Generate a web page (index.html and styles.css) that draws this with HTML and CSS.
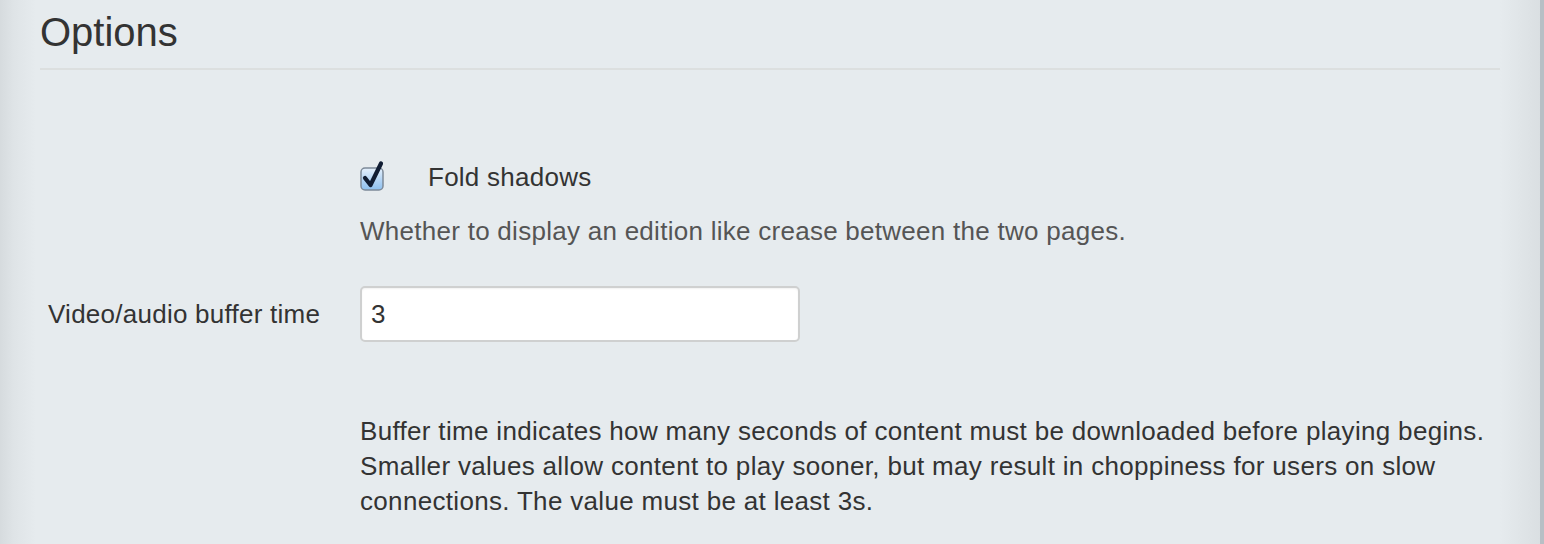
FILE: index.html
```html
<!DOCTYPE html>
<html lang="en">
<head>
<meta charset="utf-8">
<title>Options</title>
<link rel="stylesheet" href="styles.css">
</head>
<body>
<div class="page">
  <header class="header">
    <h1 class="title">Options</h1>
  </header>
  <form class="form">
    <div class="row row-check">
      <div class="label-col"></div>
      <div class="field-col">
        <label class="check">
          <span class="box">
            <svg width="28" height="34" viewBox="0 0 28 34" aria-hidden="true">
              <defs>
                <linearGradient id="bx" x1="0" y1="0" x2="0" y2="1">
                  <stop offset="0" stop-color="#e6f1fc"/>
                  <stop offset="0.5" stop-color="#b7d6f5"/>
                  <stop offset="1" stop-color="#8ec0ef"/>
                </linearGradient>
              </defs>
              <rect x="1" y="10" width="22" height="22" rx="4" ry="4" fill="url(#bx)" stroke="#7d8a99" stroke-width="1.5"/>
              <path d="M5 20 L10.5 27 L21 5.5" fill="none" stroke="#111d33" stroke-width="4.2" stroke-linecap="round" stroke-linejoin="round"/>
            </svg>
          </span>
          <span class="check-text">Fold shadows</span>
        </label>
        <p class="desc">Whether to display an edition like crease between the two pages.</p>
      </div>
    </div>
    <div class="row row-input">
      <label class="label-col label" for="buffer">Video/audio buffer time</label>
      <div class="field-col">
        <input id="buffer" class="input" type="text" value="3">
      </div>
    </div>
    <div class="row row-help">
      <div class="label-col"></div>
      <p class="help">Buffer time indicates how many seconds of content must be downloaded before playing begins.<br>Smaller values allow content to play sooner, but may result in choppiness for users on slow<br>connections. The value must be at least 3s.</p>
    </div>
  </form>
</div>
</body>
</html>
```
FILE: styles.css
```css
html, body {
  margin: 0;
  padding: 0;
}

body {
  font-family: "Liberation Sans", Arial, Helvetica, sans-serif;
  color: #333333;
  background: #e6ebee;
}

.page {
  box-sizing: border-box;
  height: 544px;
  overflow: hidden;
  background: linear-gradient(to right, #d6dbde 0, #dfe4e7 14px, #e6ebee 36px, #e6ebee 1500px, #dadfe2 1540px);
  border-right: 4px solid #b8bfc5;
}

.header {
  margin: 0 40px 0 40px;
  padding-top: 8px;
  padding-bottom: 12px;
  border-bottom: 2px solid #dcdfdf;
}

.title {
  margin: 0;
  font-size: 40px;
  line-height: 48px;
  font-weight: normal;
  color: #333333;
}

.form {
  padding-top: 91px;
}

.row {
  display: grid;
  grid-template-columns: 360px 1fr;
}

.label-col {
  box-sizing: border-box;
  padding-left: 48px;
}

.check {
  display: flex;
  align-items: flex-start;
  font-size: 26px;
  line-height: 32px;
  letter-spacing: 0.25px;
  color: #333333;
}

.box {
  display: block;
  width: 28px;
  height: 34px;
  margin-left: 0;
  margin-top: -3px;
}

.box svg {
  display: block;
}

.check-text {
  margin-left: 40px;
}

.desc {
  margin: 22px 0 0;
  font-size: 26px;
  line-height: 32px;
  letter-spacing: 0.27px;
  color: #555555;
}

.row-input {
  margin-top: 39px;
  align-items: center;
}

.label {
  font-size: 26px;
  line-height: 32px;
  color: #333333;
  letter-spacing: 0.25px;
}

.input {
  box-sizing: border-box;
  display: block;
  width: 440px;
  height: 56px;
  margin: 0;
  padding: 0 10px 0 9px;
  font-family: "Liberation Sans", Arial, sans-serif;
  font-size: 26px;
  color: #333333;
  background: #ffffff;
  border: 2px solid #cfd0d0;
  border-radius: 5px;
  box-shadow: inset 0 1px 2px rgba(0, 0, 0, 0.06);
  outline: none;
}

.row-help {
  margin-top: 72px;
}

.help {
  margin: 0;
  font-size: 26px;
  line-height: 35px;
  letter-spacing: 0.32px;
  color: #333333;
  white-space: nowrap;
}
```
